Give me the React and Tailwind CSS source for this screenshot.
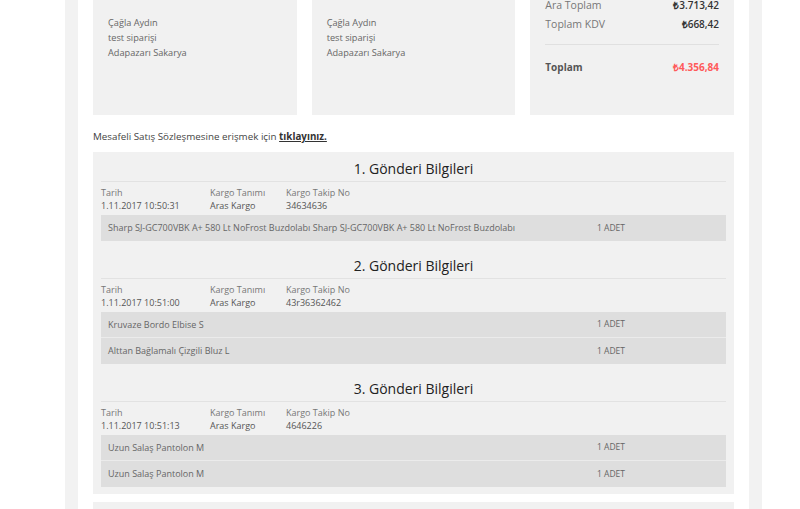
import React from 'react';

const shipments = [
  {
    no: 1,
    date: '1.11.2017 10:50:31',
    cargo: 'Aras Kargo',
    tracking: '34634636',
    items: ['Sharp SJ-GC700VBK A+ 580 Lt NoFrost Buzdolabı Sharp SJ-GC700VBK A+ 580 Lt NoFrost Buzdolabı'],
  },
  {
    no: 2,
    date: '1.11.2017 10:51:00',
    cargo: 'Aras Kargo',
    tracking: '43r36362462',
    items: ['Kruvaze Bordo Elbise S', 'Alttan Bağlamalı Çizgili Bluz L'],
  },
  {
    no: 3,
    date: '1.11.2017 10:51:13',
    cargo: 'Aras Kargo',
    tracking: '4646226',
    items: ['Uzun Salaş Pantolon M', 'Uzun Salaş Pantolon M'],
  },
];

function AddressCard() {
  return (
    <div className="bg-[#f1f1f1] px-[15px] pt-[15px] text-[9.2px] leading-[15px] text-[#666]">
      <div>Çağla Aydın</div>
      <div>test siparişi</div>
      <div>Adapazarı Sakarya</div>
    </div>
  );
}

function Shipment({ s, first }) {
  return (
    <div className={first ? '' : 'mt-[13px]'}>
      <div className="h-[25px] border-b border-[#e2e2e2] text-center text-[14px] leading-[24px] text-[#222]">
        {s.no}. Gönderi Bilgileri
      </div>
      <div className="flex pt-[4px] pb-[3px] text-[9px] leading-[13px]">
        <div className="w-[109px]">
          <div className="text-[#777]">Tarih</div>
          <div className="text-[#555]">{s.date}</div>
        </div>
        <div className="w-[76px]">
          <div className="text-[#777]">Kargo Tanımı</div>
          <div className="text-[#555]">{s.cargo}</div>
        </div>
        <div>
          <div className="text-[#777]">Kargo Takip No</div>
          <div className="text-[#555]">{s.tracking}</div>
        </div>
      </div>
      <div className="divide-y divide-[#ebebeb]">
        {s.items.map((item, i) => (
          <div key={i} className="flex h-[26px] items-center bg-[#dedede] pl-[7px] text-[9px] text-[#666]">
            <span className="w-[489px] whitespace-nowrap">{item}</span>
            <span className="text-[8.5px]">1 ADET</span>
          </div>
        ))}
      </div>
    </div>
  );
}

export default function App() {
  return (
    <div className="h-[509px] overflow-hidden bg-white font-['Open_Sans',sans-serif]">
      <div className="ml-[65px] h-full w-[697px] bg-[#f2f2f2] px-[13px]">
        <div className="h-full bg-white px-[15px]">
          {/* adres ve toplam kartları */}
          <div className="grid h-[115px] grid-cols-3 gap-[15px]">
            <AddressCard />
            <AddressCard />
            <div className="bg-[#f1f1f1] px-[15px]">
              <div className="-mt-[4px] text-[10.5px] leading-[19px]">
                <div className="flex justify-between">
                  <span className="text-[#777]">Ara Toplam</span>
                  <span className="text-[10px] font-semibold text-[#333]">₺3.713,42</span>
                </div>
                <div className="flex justify-between">
                  <span className="text-[#777]">Toplam KDV</span>
                  <span className="text-[10px] font-semibold text-[#333]">₺668,42</span>
                </div>
              </div>
              <div className="mt-[10px] border-t border-[#e0e0e0]" />
              <div className="flex justify-between pt-[13px] text-[10px] font-bold leading-[19px]">
                <span className="text-[#555]">Toplam</span>
                <span className="text-[#ff5a5a]">₺4.356,84</span>
              </div>
            </div>
          </div>

          <p className="pt-[15px] pb-[8px] text-[9.8px] leading-[14px] text-[#444]">
            Mesafeli Satış Sözleşmesine erişmek için{' '}
            <a className="font-bold text-[#333] underline">tıklayınız.</a>
          </p>

          {/* gönderi bilgileri */}
          <div className="bg-[#f1f1f1] px-[8px] pt-[5px] pb-[7px]">
            {shipments.map((s, i) => (
              <Shipment key={s.no} s={s} first={i === 0} />
            ))}
          </div>

          <div className="mt-[8px] h-[40px] bg-[#f1f1f1]" />
        </div>
      </div>
    </div>
  );
}
